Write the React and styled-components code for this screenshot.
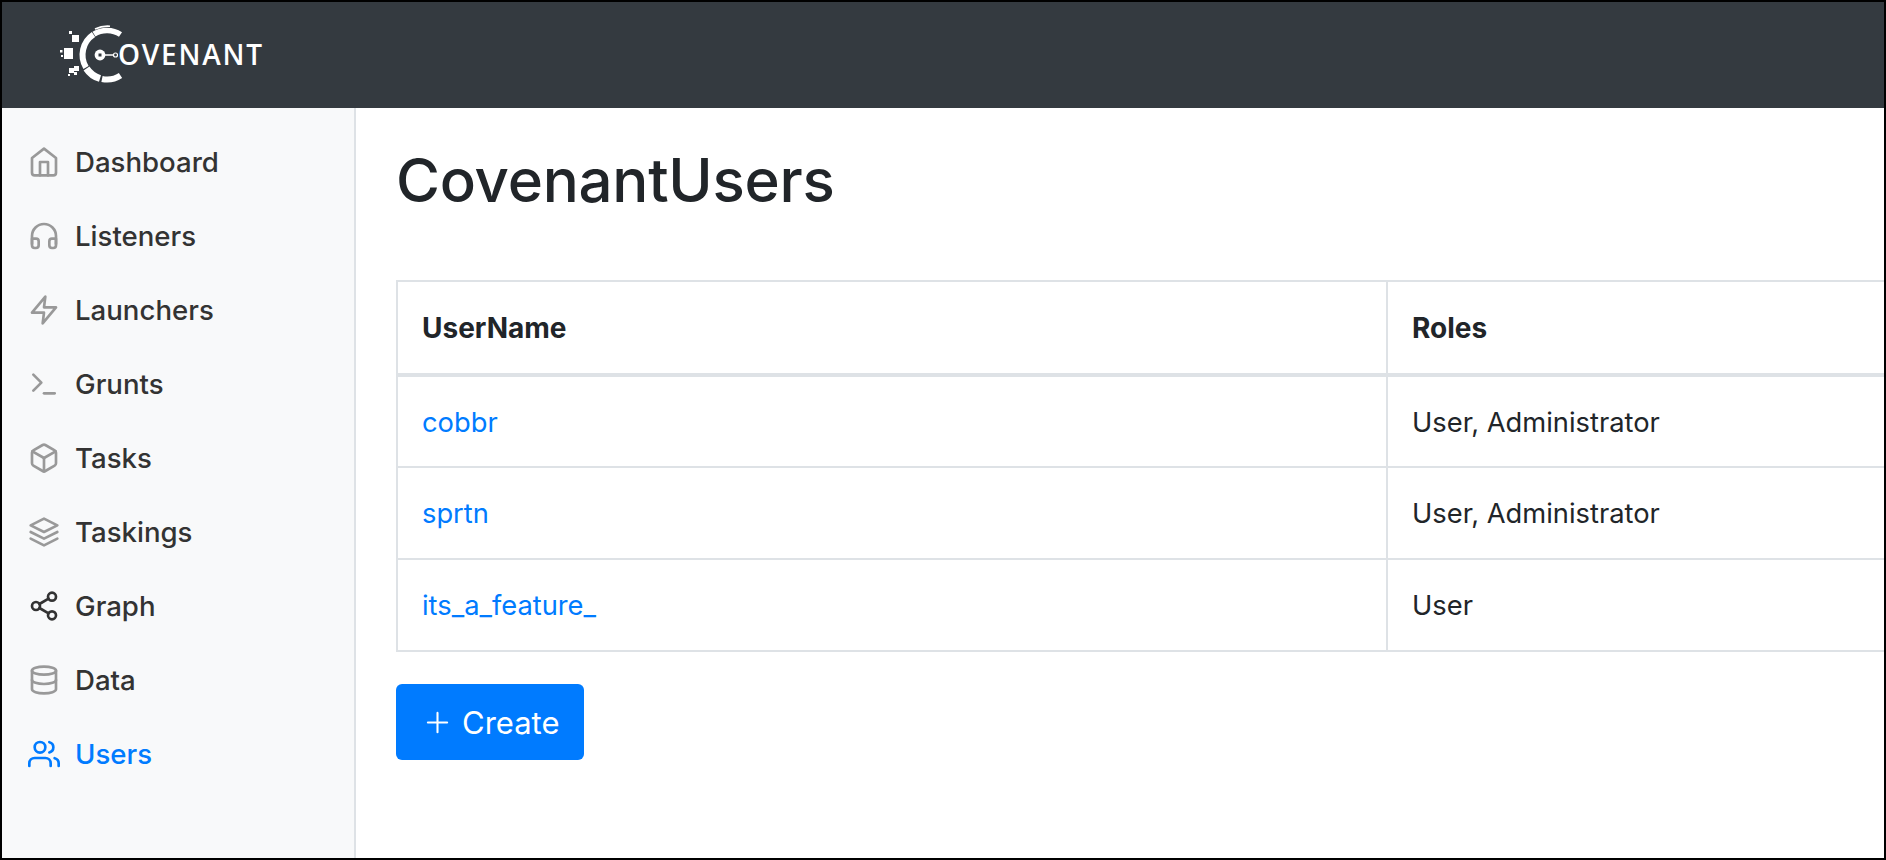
import React from "react";
import styled, { createGlobalStyle } from "styled-components";
import { FiHome, FiHeadphones, FiZap, FiTerminal, FiBox, FiLayers, FiShare2, FiDatabase, FiUsers, FiPlus } from "react-icons/fi";

const GlobalStyle = createGlobalStyle`
  html, body { margin: 0; padding: 0; height: 100%; background: #000; }
  * { box-sizing: border-box; }
  body { font-family: Inter, "Liberation Sans", sans-serif; color: #212529; }
`;

const Frame = styled.div`
  width: 1886px;
  height: 860px;
  border: 2px solid #000;
  display: flex;
  flex-direction: column;
  overflow: hidden;
  background: #fff;
`;

const Header = styled.header`
  height: 106px;
  flex: none;
  background: #343a40;
  display: flex;
  align-items: center;
  padding-left: 58px;
`;

const Brand = styled.div`
  display: flex;
  align-items: center;
  color: #fff;
`;

const BrandText = styled.span`
  font-family: "Open Sans", sans-serif;
  font-size: 28px;
  font-weight: 600;
  letter-spacing: 1.8px;
  margin-left: -6px;
  margin-top: -2px;
`;

const Body = styled.div`
  flex: 1;
  display: flex;
  min-height: 0;
`;

const Sidebar = styled.nav`
  width: 354px;
  flex: none;
  background: #f8f9fa;
  border-right: 2px solid #dee2e6;
  padding-top: 17px;
`;

const NavItem = styled.a`
  display: flex;
  align-items: center;
  height: 74px;
  padding-left: 26px;
  gap: 15px;
  font-size: 27.6px;
  font-weight: 500;
  color: ${(p) => (p.$active ? "#007bff" : "#333")};

  svg {
    width: 32px;
    height: 32px;
    flex: none;
    stroke-width: 2;
    color: ${(p) => (p.$active ? "#007bff" : p.$dark ? "#333" : "#999")};
  }
`;

const Main = styled.main`
  flex: 1;
  min-width: 0;
  overflow: hidden;
  padding: 36px 0 0 40px;
`;

const Title = styled.h1`
  margin: 0 0 64px;
  font-size: 60px;
  font-weight: 500;
  line-height: 72px;
  letter-spacing: -0.25px;
  color: #212529;
`;

const Table = styled.table`
  width: calc(100% + 40px);
  border-collapse: collapse;
  table-layout: fixed;
  font-size: 27.3px;
  line-height: 36px;
`;

const HeadCell = styled.th`
  height: 94px;
  padding: 0 24px;
  text-align: left;
  font-size: 28px;
  font-weight: 700;
  border: 2px solid #dee2e6;
  border-bottom-width: 4px;
  width: ${(p) => p.$width || "auto"};
`;

const Cell = styled.td`
  height: 92px;
  padding: 2px 24px 0;
  border: 2px solid #dee2e6;
`;

const UserLink = styled.a`
  color: #007bff;
`;

const CreateButton = styled.button`
  display: flex;
  align-items: center;
  gap: 8px;
  margin-top: 32px;
  width: 188px;
  height: 76px;
  padding: 0 0 0 25px;
  border: none;
  border-radius: 6px;
  background: #007bff;
  color: #fff;
  font-family: inherit;
  font-size: 31px;

  svg { width: 33px; height: 33px; stroke-width: 1.5; flex: none; }
`;

const navItems = [
  ["Dashboard", FiHome],
  ["Listeners", FiHeadphones],
  ["Launchers", FiZap],
  ["Grunts", FiTerminal],
  ["Tasks", FiBox],
  ["Taskings", FiLayers],
  ["Graph", FiShare2, "dark"],
  ["Data", FiDatabase],
  ["Users", FiUsers, "active"],
];

const users = [
  ["cobbr", "User, Administrator"],
  ["sprtn", "User, Administrator"],
  ["its_a_feature_", "User"],
];

// ring of the logo, with the chips that break off on its left side
function LogoMark() {
  return (
    <svg width="64" height="60" viewBox="0 0 64 60" fill="none">
      <path d="M60.5 9.5 A24.5 24.5 0 0 0 34 9.2" stroke="#fff" strokeWidth="5.5" />
      <path d="M35 4 A29 29 0 0 1 50 1.2" stroke="#fff" strokeWidth="1.6" />
      <path d="M33.5 9.5 A24.5 24.5 0 0 0 26 42.5" stroke="#fff" strokeWidth="6" />
      <path d="M26.5 43.5 A24.5 24.5 0 0 0 40 53.5" stroke="#fff" strokeWidth="7" />
      <path d="M42 54 A24.5 24.5 0 0 0 60.5 50.5" stroke="#fff" strokeWidth="6" />
      <circle cx="40" cy="30" r="5.4" fill="#fff" />
      <rect x="38.5" y="28.5" width="3" height="3" fill="#343a40" />
      <path d="M45 30 H53.5" stroke="#fff" strokeWidth="1.5" />
      <circle cx="55.5" cy="30" r="2" stroke="#fff" strokeWidth="1.2" />
      <rect x="4" y="23" width="9" height="11" fill="#fff" />
      <rect x="12" y="10" width="7" height="7" fill="#fff" />
      <rect x="9" y="6" width="3" height="3" fill="#fff" />
      <rect x="0" y="25" width="2.5" height="2.5" fill="#fff" />
      <rect x="1" y="30" width="2" height="2" fill="#fff" />
      <rect x="9" y="43" width="5" height="5" fill="#fff" />
      <rect x="14" y="41" width="5" height="5" fill="#fff" />
      <rect x="14" y="47" width="3" height="3" fill="#fff" />
      <rect x="8" y="49" width="2" height="2" fill="#fff" />
    </svg>
  );
}

export default function App() {
  return (
    <Frame>
      <GlobalStyle />
      <Header>
        <Brand>
          <LogoMark />
          <BrandText>OVENANT</BrandText>
        </Brand>
      </Header>
      <Body>
        <Sidebar>
          {navItems.map(([label, Icon, state]) => (
            <NavItem key={label} $active={state === "active"} $dark={state === "dark"}>
              <Icon />
              {label}
            </NavItem>
          ))}
        </Sidebar>
        <Main>
          <Title>CovenantUsers</Title>
          <Table>
            <thead>
              <tr>
                <HeadCell $width="990px">UserName</HeadCell>
                <HeadCell>Roles</HeadCell>
              </tr>
            </thead>
            <tbody>
              {users.map(([name, roles]) => (
                <tr key={name}>
                  <Cell><UserLink>{name}</UserLink></Cell>
                  <Cell>{roles}</Cell>
                </tr>
              ))}
            </tbody>
          </Table>
          <CreateButton><FiPlus />Create</CreateButton>
        </Main>
      </Body>
    </Frame>
  );
}
